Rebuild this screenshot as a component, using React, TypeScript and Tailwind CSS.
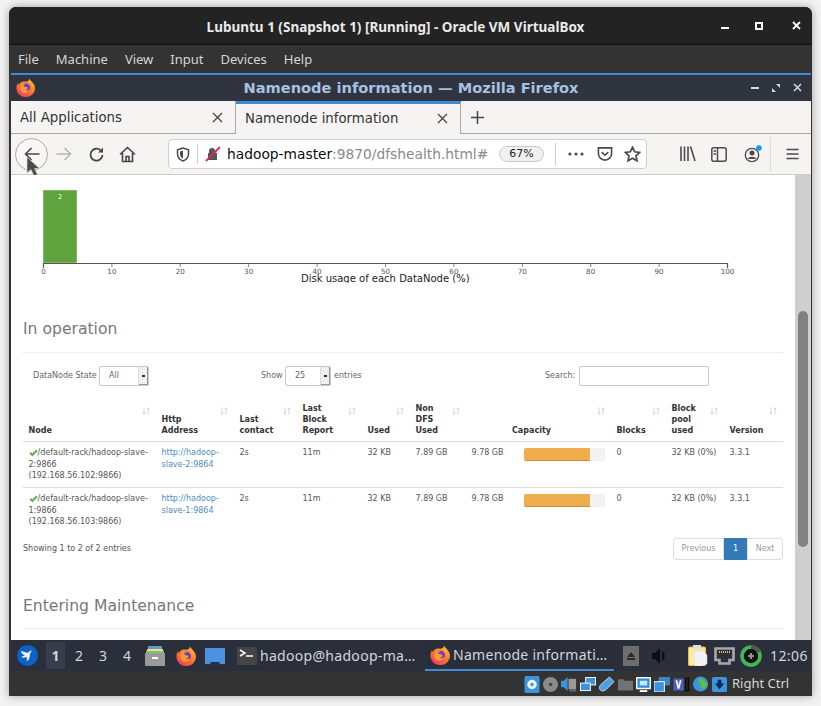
import React from "react";

const dv = "font-['DejaVu_Sans',sans-serif]";
const noto = "font-['Noto_Sans',sans-serif]";

function Firefox({ size = 20 }: { size?: number }) {
  return (
    <svg width={size} height={size} viewBox="0 0 20 20" className="shrink-0">
      <defs>
        <linearGradient id="ffa" x1="0.8" y1="0" x2="0.2" y2="1">
          <stop offset="0" stopColor="#ffbd2e" />
          <stop offset="0.5" stopColor="#ff7a2a" />
          <stop offset="1" stopColor="#f0336b" />
        </linearGradient>
      </defs>
      <path d="M14 0.500c0.600 2 2.600 2.600 3.600 4.600C19.500 7.600 20 9 20 11a9.700 9 0 0 1-19.600 0c0-2.400 0.800-4.600 1.700-6 0 1 0.300 1.700 0.900 2.200C3.800 4.700 6.300 3.300 8.500 3.600 11.500 3.900 13.800 3.500 14 0.500z" fill="url(#ffa)" />
      <circle cx="10" cy="10.500" r="5" fill="#6b3fc9" />
      <path d="M5 7c2-1.600 4.500-1.600 6.500-0.600-2 0-3.500 0.500-3.500 1.700 0 1 2 1 3.500 1.500 1.500 0.600 1 3-1.500 3.300 1.500 0.700 4 0 5-1.900-1 4-5 5.500-7.500 4.500C4.500 14.500 3.500 10 5 7z" fill="#ff9a2e" />
    </svg>
  );
}

function SortIcon() {
  return (
    <svg width="8" height="8" viewBox="0 0 8 8" className="absolute right-[6px] top-[4px]" fill="none" stroke="#d4d4d4" strokeWidth="1">
      <path d="M2 0.500V7M0.700 5.500 2 7.200 3.300 5.500M6 7.500V1M4.700 2.500 6 0.800 7.300 2.500" />
    </svg>
  );
}

function Check() {
  return (
    <svg width="9" height="8" viewBox="0 0 9 8" className="inline-block">
      <path d="M0.500 4.300 1.900 2.900 3.300 4.400 7.300 0.500 8.700 1.900 3.300 7.500z" fill="#5cb046" />
    </svg>
  );
}

function Sel({ value, w }: { value: string; w: string }) {
  return (
    <div className={`flex h-[20px] ${w} items-stretch rounded-[2px] border border-[#c8c8c8] bg-white text-[8px] text-[#666]`}>
      <span className="flex-1 self-center pl-[9px]">{value}</span>
      <span className="relative flex w-[10px] items-center justify-center border-l border-[#ddd] bg-[#efefef] shadow-[inset_-1px_-1px_0_#999]">
        <span className="h-[1.500px] w-[3px] bg-[#333]" />
      </span>
    </div>
  );
}

const heads: [string[], string][] = [
  [["Node"], "w-[133px]"],
  [["Http", "Address"], "w-[78px]"],
  [["Last", "contact"], "w-[63px]"],
  [["Last", "Block", "Report"], "w-[65px]"],
  [["Used"], "w-[48px]"],
  [["Non", "DFS", "Used"], "w-[56px]"],
  [["Capacity"], "w-[145px] !pl-[46px]"],
  [["Blocks"], "w-[55px]"],
  [["Block", "pool", "used"], "w-[58px]"],
  [["Version"], "w-[59px]"],
];

function Row({ n, ip, last }: { n: number; ip: string; last?: boolean }) {
  const td = "px-[5.500px] pt-[5px] pb-[5px] align-top";
  return (
    <tr className={`h-[46px] text-[8px] leading-[11.600px] text-[#555] ${last ? "" : "border-b border-[#dddddd]"}`}>
      <td className={td}>
        <Check />/default-rack/hadoop-slave-
        <br />
        {n}:9866
        <br />({ip}:9866)
      </td>
      <td className={`${td} text-[#4b8cc0]`}>
        http://hadoop-
        <br />
        slave-{n}:9864
      </td>
      <td className={td}>2s</td>
      <td className={td}>11m</td>
      <td className={td}>32 KB</td>
      <td className={td}>7.89 GB</td>
      <td className={td}>
        <div className="flex">
          <span className="w-[52px] shrink-0">9.78 GB</span>
          <div className="mt-[1px] flex h-[13px] w-[81px] overflow-hidden rounded-[2px] bg-[#f3f3f3] shadow-[inset_0_0_1px_#ddd]">
            <div className="h-full w-[66px] border-b border-[#d08f35] bg-[#f0ad4e]" />
          </div>
        </div>
      </td>
      <td className={td}>0</td>
      <td className={td}>32 KB (0%)</td>
      <td className={td}>3.3.1</td>
    </tr>
  );
}

function Chart() {
  const ticks = Array.from({ length: 11 }, (_, i) => i * 10);
  return (
    <svg width="760" height="108" viewBox="0 0 760 108" className="block shrink-0">
      <rect x="20" y="15" width="34" height="73" fill="#5fa33e" stroke="#e4efdc" strokeWidth="0.500" />
      <text x="37" y="24" textAnchor="middle" fontSize="6.500" fill="#fff" fontFamily="DejaVu Sans">2</text>
      <path d="M20.500 93V88.500H704.500V93" fill="none" stroke="#555" strokeWidth="1.200" />
      {ticks.map((t) => (
        <g key={t}>
          <line x1={20.500 + t * 6.84} x2={20.500 + t * 6.84} y1="88" y2="92" stroke="#555" strokeWidth="0.700" />
          <text x={20.500 + t * 6.84} y="99" textAnchor="middle" fontSize="7.200" fill="#555" fontFamily="DejaVu Sans">{t}</text>
        </g>
      ))}
      <text x="278" y="107" fontSize="10" fill="#222" fontFamily="DejaVu Sans">Disk usage of each DataNode (%)</text>
    </svg>
  );
}

function Content() {
  return (
    <div className={`relative flex h-[465px] w-[784px] flex-col overflow-hidden bg-white pl-[12px] ${dv}`}>
      <Chart />
      <div className="w-[760px]">
        <h3 className="mt-[34px] h-[24px] text-[15.600px] leading-[24px] text-[#777]">In operation</h3>
        <div className="mt-[11px] border-t border-[#eeeeee]" />
        <div className="mt-[13px] flex h-[20px] items-center text-[8px] text-[#666]">
          <span className="ml-[10px] w-[66px] whitespace-nowrap">DataNode State</span>
          <Sel value="All" w="w-[50px]" />
          <span className="ml-[112px] w-[24px]">Show</span>
          <Sel value="25" w="w-[46px]" />
          <span className="ml-[3px] w-[211px]">entries</span>
          <span className="w-[34px]">Search:</span>
          <div className="h-[20px] w-[130px] rounded-[2px] border border-[#c8c8c8] bg-white" />
        </div>
        <table className="mt-[17px] w-[760px] table-fixed border-collapse">
          <thead>
            <tr className="border-b border-[#dddddd]">
              {heads.map(([l, w]) => (
                <th key={l.join()} className={`relative ${w} px-[5.500px] pb-[5px] text-left align-bottom text-[8px] leading-[11px] font-bold text-[#333]`}>
                  <SortIcon />
                  {l.map((x) => (
                    <div key={x}>{x}</div>
                  ))}
                </th>
              ))}
            </tr>
          </thead>
          <tbody>
            <Row n={2} ip="192.168.56.102" />
            <Row n={1} ip="192.168.56.103" last />
          </tbody>
        </table>
        <div className="mt-[4px] flex items-center justify-between text-[8px] text-[#555]">
          <span>Showing 1 to 2 of 2 entries</span>
          <div className="flex h-[22px] items-stretch text-[#999]">
            <span className="flex w-[51px] items-center justify-center rounded-l-[3px] border border-[#ddd]">Previous</span>
            <span className="flex w-[23px] items-center justify-center bg-[#337ab7] text-white">1</span>
            <span className="flex w-[36px] items-center justify-center rounded-r-[3px] border border-[#ddd]">Next</span>
          </div>
        </div>
        <h3 className="mt-[34px] h-[24px] text-[15.600px] leading-[24px] text-[#777]">Entering Maintenance</h3>
        <div className="mt-[10px] border-t border-[#eeeeee]" />
      </div>
    </div>
  );
}

function TB({ children, w = 24 }: { children: React.ReactNode; w?: number }) {
  return (
    <svg width={w} height="18" viewBox={`0 0 ${w} 18`} fill="none" stroke="#4a4a4f" strokeWidth="1.600" className="shrink-0">
      {children}
    </svg>
  );
}

function Nav() {
  return (
    <div className="relative flex h-[40px] shrink-0 items-center bg-[#f5f4f2] pl-[4px]">
      <div className="flex h-[33px] w-[33px] items-center justify-center rounded-full border border-[#aaa] bg-[#f8f7f5]">
        <svg width="16" height="14" viewBox="0 0 16 14" fill="none" stroke="#45454a" strokeWidth="1.600">
          <path d="M15.500 7H1.500M7.500 1 1.500 7l6 6" />
        </svg>
      </div>
      <svg width="16" height="14" viewBox="0 0 16 14" fill="none" stroke="#b5b5b5" strokeWidth="1.600" className="ml-[8px]">
        <path d="M0.500 7H14.500M8.500 1l6 6-6 6" />
      </svg>
      <svg width="17" height="17" viewBox="0 0 17 17" fill="none" stroke="#45454a" strokeWidth="1.800" className="ml-[16px]">
        <path d="M14.500 9a6 6 0 1 1-1.800-4.600L14.500 6" />
        <path d="M15 1.500V6.500H10" fill="#45454a" stroke="none" />
      </svg>
      <svg width="17" height="17" viewBox="0 0 17 17" fill="none" stroke="#45454a" strokeWidth="1.600" className="ml-[14px]">
        <path d="M1 8.500 8.500 1.500 16 8.500M3.500 7v8.500h10V7M7 15.500v-5h3v5" />
      </svg>
      {/* URL bar */}
      <div className={`ml-[32px] flex h-[30px] w-[479px] items-center overflow-hidden rounded-[4px] border border-[#d0cfcd] bg-white ${dv}`}>
        <svg width="14" height="15" viewBox="0 0 14 15" fill="none" stroke="#4a4a4f" strokeWidth="1.500" className="ml-[7px] shrink-0">
          <path d="M7 1 1.500 2.800V7c0 3.400 2.500 5.800 5.500 7 3-1.200 5.500-3.600 5.500-7V2.800z" />
          <path d="M7 3.500 4 4.600V7.300c0 1.800 1.300 3.300 3 4.100z" fill="#4a4a4f" stroke="none" />
        </svg>
        <span className="ml-[7px] h-[20px] w-px bg-[#ccc]" />
        <svg width="16" height="16" viewBox="0 0 16 16" className="ml-[7px] shrink-0">
          <path d="M4 7V5a3 3 0 0 1 6 0v2h2v7H3V7z" fill="#55555a" />
          <path d="M1 15 15 1" stroke="#e22850" strokeWidth="1.800" />
        </svg>
        <span className="ml-[6px] w-[263px] shrink-0 whitespace-nowrap text-[13.800px] text-[#0c0c0d]">
          hadoop-master<span className="text-[#8a8a8f]">:9870/dfshealth.html#</span>
        </span>
        <span className="ml-[9px] flex h-[16px] w-[45px] shrink-0 items-center justify-center rounded-full border border-[#c8c8c8] bg-[#f0f0f0] text-[11px] text-[#222]">67%</span>
        <span className="ml-[11px] h-[22px] w-px shrink-0 bg-[#ccc]" />
        <svg width="16" height="4" viewBox="0 0 16 4" className="ml-[12px] shrink-0" fill="#4a4a4f">
          <circle cx="2" cy="2" r="1.600" />
          <circle cx="8" cy="2" r="1.600" />
          <circle cx="14" cy="2" r="1.600" />
        </svg>
        <svg width="16" height="16" viewBox="0 0 17 16" fill="none" stroke="#4a4a4f" strokeWidth="1.700" className="ml-[13px] shrink-0">
          <path d="M1.500 1.500h14v6a7 7 0 0 1-14 0z" />
          <path d="M5 6l3.500 3.300L12 6" />
        </svg>
        <svg width="17" height="16" viewBox="0 0 17 16" fill="none" stroke="#4a4a4f" strokeWidth="1.700" className="ml-[11px] shrink-0">
          <path d="M8.500 1.200l2.200 4.600 5 0.600-3.700 3.400 1 5-4.500-2.500-4.500 2.500 1-5L1.300 6.400l5-0.600z" />
        </svg>
      </div>
      <div className="ml-[33px] flex items-center">
        <TB w={16}>
          <path d="M1 1.500V16M4.500 1.500V16M8 1.500V16M10.500 1.500 15 16" />
        </TB>
        <svg width="16" height="15" viewBox="0 0 16 15" fill="none" stroke="#4a4a4f" strokeWidth="1.500" className="ml-[15px]">
          <rect x="0.800" y="0.800" width="14.400" height="13.400" rx="2" />
          <path d="M6.500 1V14M2.500 4h2.500M2.500 7h2.500" />
        </svg>
        <svg width="20" height="18" viewBox="0 0 20 18" className="ml-[17px]" fill="none">
          <circle cx="8" cy="10" r="6.700" stroke="#4a4a4f" strokeWidth="1.300" />
          <circle cx="8" cy="8" r="2.500" fill="#4a4a4f" />
          <path d="M3.500 14a5 4 0 0 1 9 0z" fill="#4a4a4f" />
          <circle cx="15" cy="3" r="2.800" fill="#0a9dff" />
        </svg>
        <span className="ml-[6px] h-[34px] w-px bg-[#dcdcdc]" />
        <svg width="13" height="12" viewBox="0 0 13 12" className="ml-[15px]" stroke="#4a4a4f" strokeWidth="1.700">
          <path d="M0.500 1.500H12.500M0.500 6H12.500M0.500 10.500H12.500" />
        </svg>
      </div>
      <svg width="14" height="22" viewBox="0 0 14 22" className="absolute left-[15px] top-[22px]">
        <path d="M1 1V17L5 13.500 8 20 11.500 18.500 8.500 12.500H13.500z" fill="#4c4c4c" stroke="#ddd" strokeWidth="0.600" />
      </svg>
    </div>
  );
}

function Tab({ label, active }: { label: string; active?: boolean }) {
  return (
    <div className={`flex h-[33px] w-[225px] items-center justify-between pl-[9px] pr-[12px] ${active ? "border-t-[3px] border-r border-[#3d8ad9] border-r-[#a8a8a8] bg-[#f5f4f2] pb-[1px]" : "border-r border-b border-[#a8a8a8] bg-[#f5f4f2] pt-[1px]"}`}>
      <span className="text-[13.300px] text-[#333]">{label}</span>
      <svg width="11" height="11" viewBox="0 0 11 11" stroke="#45454a" strokeWidth="1.300">
        <path d="M1 1 10 10M10 1 1 10" />
      </svg>
    </div>
  );
}

function StatusIcons() {
  return (
    <div className="flex items-center gap-[3px]">
      <svg width="16" height="17" viewBox="0 0 16 18"><rect width="16" height="18" rx="2" fill="#3d94dc" /><circle cx="8" cy="9" r="5" fill="#e8f4fc" /><circle cx="8" cy="9" r="1.800" fill="#3d94dc" /></svg>
      <svg width="15" height="15" viewBox="0 0 15 15"><circle cx="7.500" cy="7.500" r="7.500" fill="#8a8a8a" /><circle cx="7.500" cy="7.500" r="1.800" fill="#444" /></svg>
      <svg width="16" height="16" viewBox="0 0 17 17"><path d="M0 5h3l4-4v15L3 12H0z" fill="#3d94dc" /><rect x="8" y="3" width="8" height="11" fill="#9a9a9a" /><rect x="9" y="14" width="7" height="2.500" fill="#666" /></svg>
      <svg width="16" height="15" viewBox="0 0 17 16"><rect x="6" y="0.500" width="10.500" height="8" fill="#3d94dc" stroke="#fff" /><rect x="0.500" y="6.500" width="10.500" height="8" fill="#3d94dc" stroke="#fff" /></svg>
      <svg width="16" height="16" viewBox="0 0 17 17"><path d="M11 1l5 5-8 8c-2 2-5 2.500-6.500 1S0 11 2 9z" fill="#4da0e6" stroke="#fff" strokeWidth="0.700" /></svg>
      <svg width="15" height="14" viewBox="0 0 16 14"><path d="M0 2h6l1 1.500h9V14H0z" fill="#727272" /></svg>
      <svg width="15" height="15" viewBox="0 0 16 16"><rect width="16" height="13" rx="1" fill="#fff" /><rect x="1.500" y="1.500" width="13" height="10" fill="#2e8ee0" /><rect x="4" y="4" width="8" height="5" fill="#cfe8fb" /><rect x="4" y="14" width="8" height="2" fill="#fff" /></svg>
      <svg width="16" height="15" viewBox="0 0 17 16"><rect x="5" width="12" height="9" fill="#3f84c9" /><rect y="5" width="11" height="11" fill="#3d94dc" stroke="#fff" /></svg>
      <svg width="17" height="15" viewBox="0 0 20 16"><rect x="0.500" y="1" width="12" height="14" fill="#4f5fc4" /><path d="M3 3h2l1.500 6L8 3h2L7.500 13h-2z" fill="#fff" /><rect x="15" y="0.500" width="3.500" height="15" fill="#222" stroke="#000" /></svg>
      <svg width="16" height="16" viewBox="0 0 17 17"><circle cx="8" cy="8.500" r="8" fill="#3d94dc" /><path d="M6 3h4l6 6-6 6v-3H6l3-3-3-3z" fill="#55c34a" /></svg>
      <svg width="15" height="15" viewBox="0 0 16 16"><rect width="16" height="16" rx="2" fill="#3d94dc" /><path d="M6 3h4v4h3l-5 6-5-6h3z" fill="#0f2a55" /></svg>
    </div>
  );
}

function Taskbar() {
  return (
    <div className={`flex h-[31px] shrink-0 items-center bg-[#2b2f3b] pl-[6px] text-[#d4d6d8] ${noto}`}>
      <svg width="21" height="21" viewBox="0 0 21 21" className="shrink-0">
        <circle cx="10.500" cy="10.500" r="10.500" fill="#0b63c5" />
        <path d="M4 6c3 1 5 1 6 2l5-3-2 4c0 3-1 6-3 7-1-1 1-3-1-4-2 1-3 1-5 0 2-1 3-1 4-2-2 0-4-2-4-4z" fill="#e8f1fb" />
      </svg>
      <div className="ml-[8px] flex items-center text-[14px]">
        <span className="flex h-[27px] w-[19px] items-center justify-center bg-[#383d4b] font-bold">1</span>
        <span className="ml-[2px] flex w-[24px] justify-center">2</span>
        <span className="flex w-[24px] justify-center">3</span>
        <span className="flex w-[24px] justify-center">4</span>
      </div>
      <svg width="20" height="20" viewBox="0 0 20 20" className="ml-[6px] shrink-0">
        <rect x="3" y="0" width="14" height="3" fill="#5b9ad6" />
        <rect x="2" y="3" width="16" height="2.500" fill="#f2e06a" />
        <rect x="1" y="5" width="18" height="2" fill="#7cc47c" />
        <rect x="0" y="7" width="20" height="13" rx="1" fill="#9a9a9a" />
        <rect x="7" y="11" width="6" height="2" fill="#fff" />
      </svg>
      <span className="ml-[11px]"><Firefox size={20} /></span>
      <svg width="20" height="18" viewBox="0 0 20 18" className="ml-[9px] shrink-0">
        <rect width="20" height="18" fill="#4c91e0" />
        <path d="M0 0h20v1H0zM0 17h5l1-2h8l1 2h5v1H0z" fill="#22324f" />
      </svg>
      <div className="ml-[12px] flex w-[188px] shrink-0 items-center">
        <svg width="20" height="18" viewBox="0 0 20 18" className="shrink-0">
          <rect width="20" height="18" rx="1" fill="#454545" />
          <path d="M3 3l5 3-5 3" fill="none" stroke="#fff" strokeWidth="1.500" />
          <path d="M9 9h7" stroke="#fff" strokeWidth="1.500" />
        </svg>
        <span className="ml-[3px] whitespace-nowrap text-[14px] tracking-[0.300px]">hadoop@hadoop-ma…</span>
      </div>
      <div className="flex h-[31px] w-[189px] shrink-0 items-center border-b-[2px] border-[#3d8ad9] bg-[#2a2e39] pl-[5px]">
        <Firefox size={20} />
        <span className="ml-[3px] whitespace-nowrap text-[14px] tracking-[0.300px]">Namenode informati…</span>
      </div>
      <div className="ml-[9px] flex h-[20px] w-[16px] shrink-0 items-center justify-center bg-[#6e6e6e]">
        <svg width="10" height="8" viewBox="0 0 10 8" fill="#2b2b2b"><path d="M5 0l4 5H1zM1 6h8v2H1z" /></svg>
      </div>
      <svg width="17" height="16" viewBox="0 0 17 16" className="ml-[13px] shrink-0" fill="#0d0f14">
        <path d="M0 5h3l5-4.500v15L3 11H0z" />
        <path d="M10 3a6 6 0 0 1 0 10z" fill="#0d0f14" />
      </svg>
      <svg width="20" height="21" viewBox="0 0 20 21" className="ml-[19px] shrink-0">
        <rect x="0.500" y="2" width="17" height="18.500" rx="1.500" fill="#f9ecaa" stroke="#e6bf36" strokeWidth="1.200" />
        <rect x="5" y="0" width="8" height="4" fill="#e0e0e0" />
        <path d="M6 6h9l4 4v9l-6 2H7z" fill="#f3f3f3" stroke="#ddd" strokeWidth="0.500" />
      </svg>
      <svg width="21" height="18" viewBox="0 0 21 18" className="ml-[6px] shrink-0">
        <path d="M1.500 1.500h18v11.500h-4v3.500h-10V13h-4z" fill="#2b2f3b" stroke="#a8a8a8" strokeWidth="2.600" />
        <path d="M5 5h11" stroke="#e9c24c" strokeWidth="2" strokeDasharray="1 1" />
      </svg>
      <svg width="22" height="22" viewBox="0 0 22 22" className="ml-[5px] shrink-0">
        <circle cx="11" cy="11" r="9" fill="#0d0f14" stroke="#3fb950" strokeWidth="3.600" />
        <path d="M11 2a9 9 0 0 1 8 5" fill="none" stroke="#555" strokeWidth="3.600" />
        <path d="M8 11h6M11 8v6" stroke="#8a9a8a" strokeWidth="2.200" />
      </svg>
      <span className="ml-[8px] text-[14px] tracking-[0.400px]">12:06</span>
    </div>
  );
}

export default function App() {
  return (
    <div className="h-[706px] w-[821px] overflow-hidden bg-[#f2f2f2] pl-[9px] pt-[7px]">
      <div className={`flex h-[689px] w-[803px] flex-col overflow-hidden rounded-t-[7px] bg-[#333333] shadow-[0_0_9px_rgba(0,0,0,0.35)] ${noto}`}>
        <div className="flex h-[38px] shrink-0 items-center border-b border-[#111] bg-[#232323]">
          <div className="flex-1 pl-[61px] pt-[3px] text-center text-[13.500px] font-bold text-[#e9e9e9]">Lubuntu 1 (Snapshot 1) [Running] - Oracle VM VirtualBox</div>
          <div className="flex items-center">
            <span className="mt-[5px] h-[2px] w-[8px] bg-white" />
            <span className="ml-[26px] h-[8px] w-[8px] border-2 border-white" />
            <svg width="9" height="9" viewBox="0 0 9 9" stroke="#fff" strokeWidth="1.800" className="ml-[29px] mr-[11px]">
              <path d="M1 1 8 8M8 1 1 8" />
            </svg>
          </div>
        </div>
        <div className="flex h-[28px] shrink-0 items-center gap-[17px] bg-[#333333] pl-[9px] pt-[1px] text-[13px] text-[#d6d6d6]">
          <span>File</span>
          <span>Machine</span>
          <span>View</span>
          <span>Input</span>
          <span>Devices</span>
          <span>Help</span>
        </div>
        <div className="ml-[2px] mr-px flex h-[598px] shrink-0 flex-col border-t-[2px] border-[#3d8ad9]">
          <div className={`relative flex h-[26px] shrink-0 items-center justify-center bg-[#2f343f] ${dv}`}>
            <span className="absolute left-[5px] top-[3px]"><Firefox size={19} /></span>
            <span className="text-[14.600px] font-bold text-[#a9c1e0]">Namenode information — Mozilla Firefox</span>
            <div className="absolute right-[9px] top-[8px] flex items-center">
              <span className="h-[2px] w-[8px] bg-[#d3dae3]" />
              <svg width="8" height="8" viewBox="0 0 8 8" fill="#d3dae3" className="ml-[13px]">
                <path d="M0 8V4l4 4zM8 0v4L4 0z" />
              </svg>
              <svg width="9" height="9" viewBox="0 0 9 9" stroke="#d3dae3" strokeWidth="1.500" className="ml-[13px]">
                <path d="M1 1 8 8M8 1 1 8" />
              </svg>
            </div>
          </div>
          <div className={`flex h-[33px] shrink-0 items-center bg-[#f5f4f2] ${dv}`}>
            <Tab label="All Applications" />
            <Tab label="Namenode information" active />
            <div className="flex h-[33px] flex-1 items-center border-b border-[#a8a8a8] pl-[9px]">
              <svg width="15" height="15" viewBox="0 0 15 15" stroke="#45454a" strokeWidth="1.500">
                <path d="M7.500 1V14M1 7.500H14" />
              </svg>
            </div>
          </div>
          <Nav />
          <div className="flex h-[466px] shrink-0 border-t border-[#cfcdca] bg-white">
            <Content />
            <div className="flex w-[16px] shrink-0 justify-center bg-[#cfcfcf]">
              <div className="mt-[136px] h-[236px] w-[10px] rounded-[5px] bg-[#808282]" />
            </div>
          </div>
          <Taskbar />
        </div>
        <div className={`flex h-[25px] shrink-0 items-center bg-[#333333] pl-[515px] pt-[1px] text-[13px] text-[#d6d6d6] ${noto}`}>
          <StatusIcons />
          <span className="ml-[5px]">Right Ctrl</span>
        </div>
      </div>
    </div>
  );
}
